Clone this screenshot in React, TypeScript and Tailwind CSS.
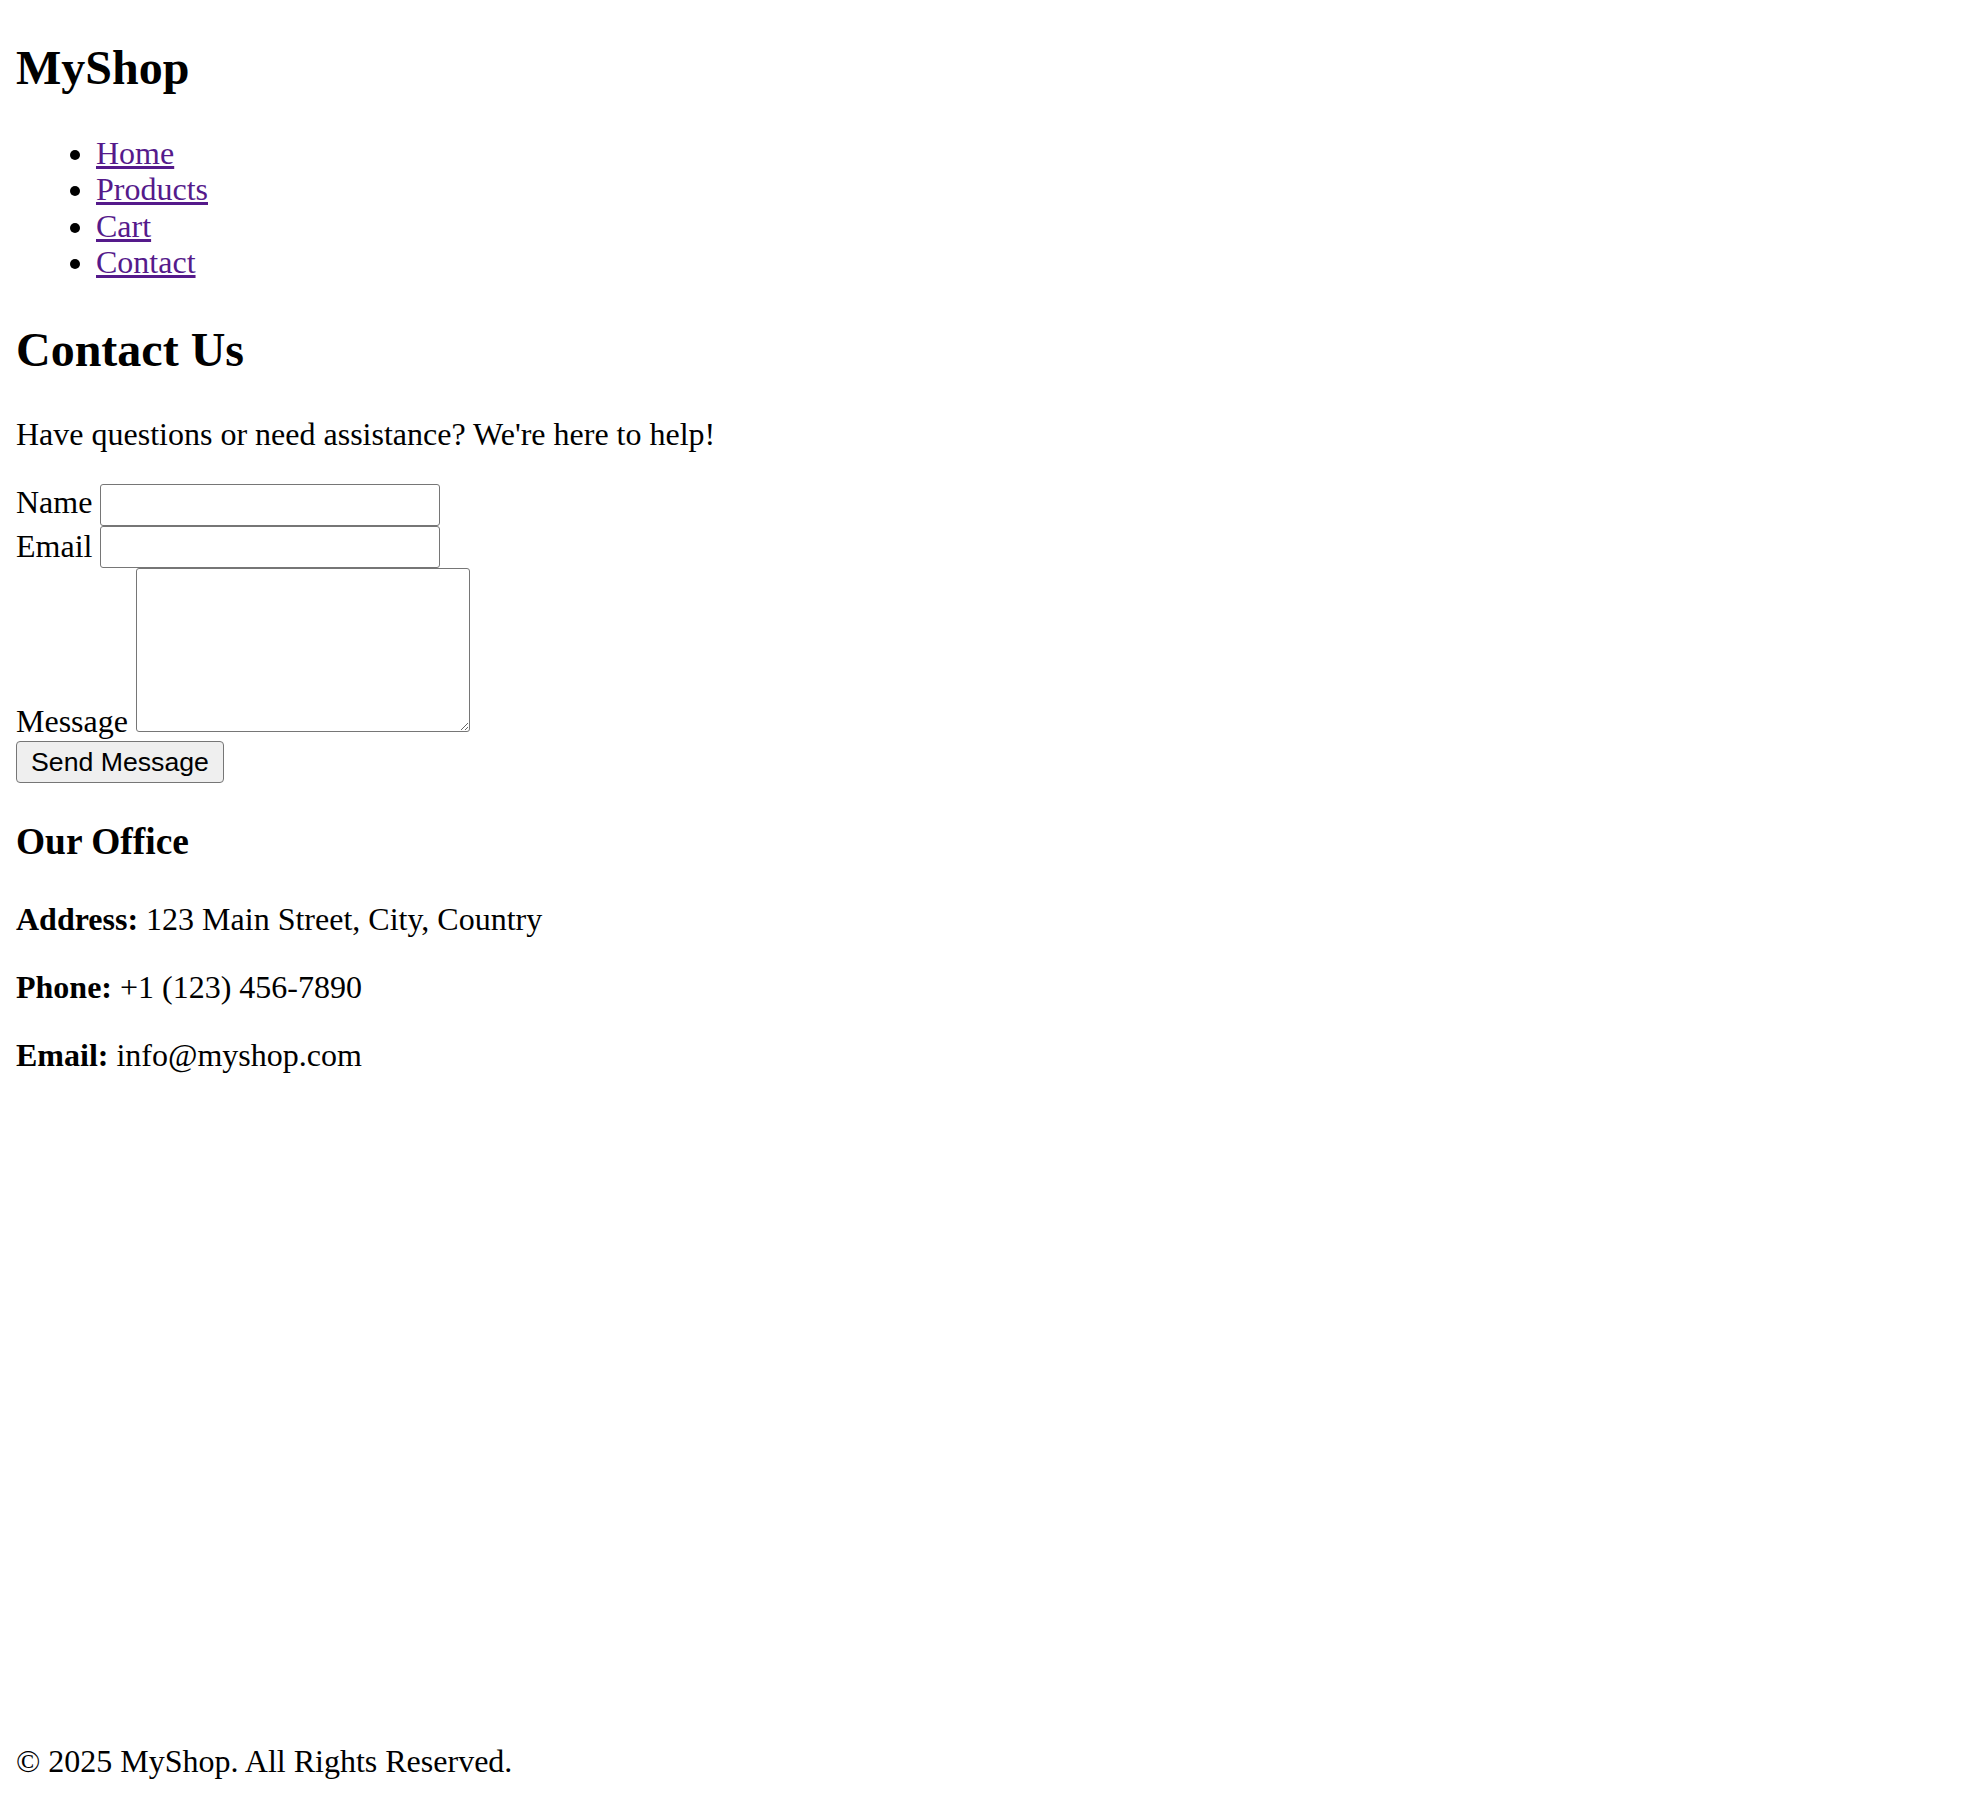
import React from "react";

const navLinks = ["Home", "Products", "Cart", "Contact"];

const App = () => {
  return (
    <div className="min-h-screen flex flex-col px-[16px] bg-white text-black font-['Liberation_Serif','Times_New_Roman',serif] leading-[1.13]">
      <div className="flex-1">
        <header>
          <h1 className="text-[48px] font-bold mt-[41px] mb-[40px] leading-[1.13]">MyShop</h1>
          <nav>
            <ul className="list-disc pl-[80px] my-[32px] text-[32px]">
              {navLinks.map((l) => (
                <li key={l} className="leading-[1.13]">
                  <a href="#" className="text-[#551a8b] underline">
                    {l}
                  </a>
                </li>
              ))}
            </ul>
          </nav>
        </header>

        <section>
          <h2 className="text-[48px] font-bold mt-[43px] mb-[39px] leading-[1.13]">Contact Us</h2>
          <p className="text-[32px] my-[32px]">Have questions or need assistance? We're here to help!</p>

          <form onSubmit={(e) => e.preventDefault()} className="text-[32px] mt-[32px]">
            <div className="flex items-start gap-[8px]">
              <label htmlFor="name" className="leading-[1.13]">Name</label>
              <input
                id="name"
                type="text"
                className="w-[340px] h-[42px] border border-[#767676] rounded-[3px] bg-white"
              />
            </div>
            <div className="flex items-start gap-[8px]">
              <label htmlFor="email" className="leading-[1.13] mt-[1.5px]">Email</label>
              <input
                id="email"
                type="email"
                className="w-[340px] h-[42px] border border-[#767676] rounded-[3px] bg-white"
              />
            </div>
            <div className="flex items-end gap-[8px]">
              <label htmlFor="message" className="leading-[1.13]">Message</label>
              <textarea
                id="message"
                className="w-[334px] h-[164px] mb-[7px] border border-[#767676] rounded-[3px] bg-white"
              />
            </div>
            <button
              type="submit"
              className="mt-[2px] w-[208px] h-[42px] flex items-center justify-center bg-[#efefef] border border-[#767676] rounded-[4px] text-[26.67px] font-['Liberation_Sans',Arial,sans-serif] leading-[normal]"
            >
              Send Message
            </button>
          </form>

          <h3 className="text-[37.44px] font-bold my-[37.5px] leading-[1.13]">Our Office</h3>
          <p className="text-[32px] my-[32px]">
            <strong className="font-bold">Address:</strong> 123 Main Street, City, Country
          </p>
          <p className="text-[32px] my-[32px]">
            <strong className="font-bold">Phone:</strong> +1 (123) 456-7890
          </p>
          <p className="text-[32px] my-[32px]">
            <strong className="font-bold">Email:</strong> info@myshop.com
          </p>
        </section>
      </div>

      <footer>
        <p className="text-[32px] mt-[32px] mb-[33px]">© 2025 MyShop. All Rights Reserved.</p>
      </footer>
    </div>
  );
};

export default App;
